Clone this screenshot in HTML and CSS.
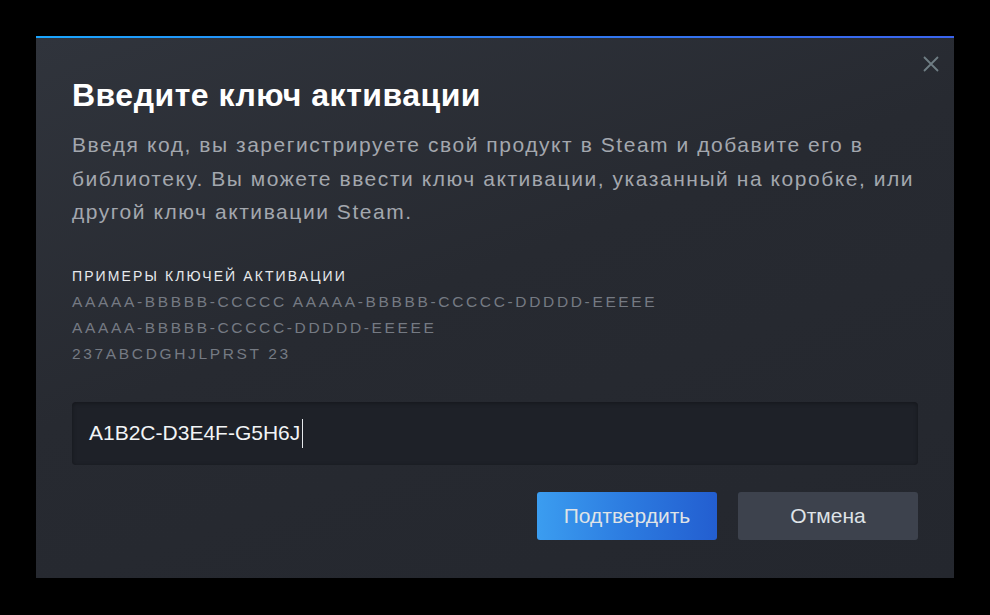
FILE: index.html
```html
<!DOCTYPE html>
<html lang="ru">
<head>
<meta charset="utf-8">
<title>Введите ключ активации</title>
<link rel="stylesheet" href="styles.css">
</head>
<body>
<div class="backdrop">
  <div class="dialog">
    <button class="close" aria-label="Закрыть">
      <svg width="16" height="16" viewBox="0 0 16 16"><path d="M1 1L15 15M15 1L1 15" stroke="currentColor" stroke-width="1.8" fill="none"/></svg>
    </button>
    <h1 class="title">Введите ключ активации</h1>
    <p class="desc">Введя код, вы зарегистрируете свой продукт в Steam и добавите его в библиотеку. Вы можете ввести ключ активации, указанный на коробке, или другой ключ активации Steam.</p>
    <div class="examples">
      <div class="examples-label">Примеры ключей активации</div>
      <div class="example-list">
        <div class="example">AAAAA-BBBBB-CCCCC AAAAA-BBBBB-CCCCC-DDDDD-EEEEE</div>
        <div class="example">AAAAA-BBBBB-CCCCC-DDDDD-EEEEE</div>
        <div class="example">237ABCDGHJLPRST 23</div>
      </div>
    </div>
    <div class="field"><span class="field-value">A1B2C-D3E4F-G5H6J</span><span class="caret"></span></div>
    <div class="actions">
      <button class="btn btn-primary">Подтвердить</button>
      <button class="btn btn-secondary">Отмена</button>
    </div>
  </div>
</div>
</body>
</html>
```
FILE: styles.css
```css
html, body {
  margin: 0;
  padding: 0;
  background: #000;
  height: 100%;
}

body {
  font-family: "Liberation Sans", Arial, sans-serif;
}

.backdrop {
  padding: 36px 36px 0 36px;
}

.dialog {
  position: relative;
  box-sizing: border-box;
  width: 918px;
  height: 542px;
  padding: 38px 36px 0 36px;
  border-top: 2px solid transparent;
  background:
    linear-gradient(90deg, #1aa6ff 0%, #2f7df0 50%, #3a64ee 100%) top / 100% 2px no-repeat border-box,
    linear-gradient(160deg, #30343c 0%, #272a31 45%, #24272e 100%) padding-box;
}

.close {
  position: absolute;
  top: 18px;
  right: 15px;
  width: 16px;
  height: 16px;
  padding: 0;
  border: 0;
  background: none;
  color: #6f7d84;
  display: flex;
}

.title {
  margin: 0;
  font-size: 32px;
  line-height: 38px;
  font-weight: 700;
  letter-spacing: 0.5px;
  color: #ffffff;
}

.desc {
  margin: 14px -16px 0 0;
  font-size: 21px;
  line-height: 33.5px;
  color: #a3a7ae;
  letter-spacing: 1.55px;
}

.examples {
  margin-top: 38px;
}

.examples-label {
  font-size: 14px;
  line-height: 18px;
  text-transform: uppercase;
  letter-spacing: 2.1px;
  color: #e6e9ec;
}

.example-list {
  margin-top: 4px;
}

.example {
  font-size: 15.5px;
  line-height: 26px;
  letter-spacing: 2.65px;
  color: #757a83;
}

.field {
  margin-top: 35px;
  height: 63px;
  box-sizing: border-box;
  border-radius: 4px;
  background: #1e2128;
  box-shadow: inset 0 1px 4px rgba(0, 0, 0, 0.35);
  display: flex;
  align-items: center;
  padding-left: 17px;
}

.field-value {
  font-size: 21px;
  color: #f2f4f6;
}

.caret {
  width: 1px;
  height: 29px;
  background: #e6e9ec;
  margin-left: 2px;
}

.actions {
  margin-top: 27px;
  display: flex;
  justify-content: flex-end;
  gap: 21px;
}

.btn {
  width: 180px;
  height: 48px;
  border: 0;
  border-radius: 3px;
  font-family: "Liberation Sans", Arial, sans-serif;
  font-size: 21px;
  color: #dfe3e7;
  padding: 0;
}

.btn-primary {
  background: linear-gradient(90deg, #3b9df0 0%, #2c7be0 50%, #235ed0 100%);
}

.btn-secondary {
  background: #3d424d;
}
```
